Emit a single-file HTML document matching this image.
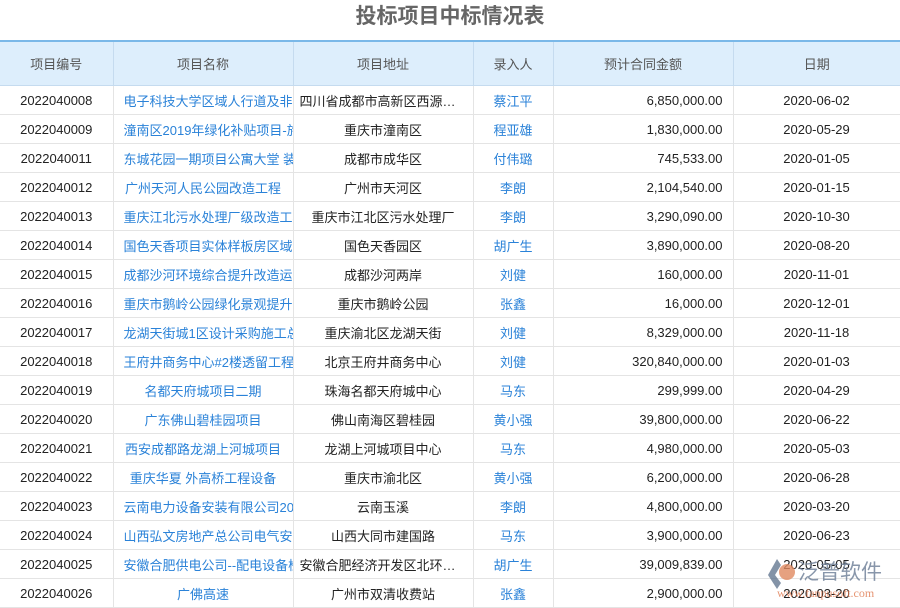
<!DOCTYPE html>
<html><head><meta charset="utf-8"><style>
*{margin:0;padding:0;box-sizing:border-box}
body{width:900px;height:600px;overflow:hidden;background:#fff;font-family:"Liberation Sans","Noto Sans CJK SC",sans-serif;position:relative}
h1{position:absolute;top:2px;left:0;width:900px;text-align:center;font-size:21px;line-height:30px;color:#666;font-weight:bold}
table{position:absolute;top:40px;left:0;border-collapse:collapse;table-layout:fixed;width:900px}
th{height:44px;background:#ddeefc;color:#555;font-weight:normal;font-size:13px;border-left:1px solid #c5dbef;border-top:2px solid #7ab8e8;border-bottom:1px solid #c5dbef}
td{height:29px;font-size:13px;color:#222;border:1px solid #e4e4e4;white-space:nowrap;overflow:hidden;text-align:center;padding:1px 10px 0}
td.n,td.p{color:#2a82d8}
td.n{text-overflow:clip}
td.a{text-overflow:ellipsis;padding:1px 6px 0}
td.m{text-align:right;padding-right:10px}
th:first-child,td:first-child{border-left:none}
.logo{position:absolute;left:765px;top:553px;width:135px;height:47px}
</style></head><body>
<h1>投标项目中标情况表</h1>
<table>
<colgroup><col style="width:113px"><col style="width:180px"><col style="width:180px"><col style="width:80px"><col style="width:180px"><col style="width:167px"></colgroup>
<tr><th>项目编号</th><th>项目名称</th><th>项目地址</th><th>录入人</th><th>预计合同金额</th><th>日期</th></tr>
<tr><td>2022040008</td><td class="n">电子科技大学区域人行道及非机动车道改造</td><td class="a">四川省成都市高新区西源大道</td><td class="p">蔡江平</td><td class="m">6,850,000.00</td><td>2020-06-02</td></tr>
<tr><td>2022040009</td><td class="n">潼南区2019年绿化补贴项目-施工</td><td class="a">重庆市潼南区</td><td class="p">程亚雄</td><td class="m">1,830,000.00</td><td>2020-05-29</td></tr>
<tr><td>2022040011</td><td class="n">东城花园一期项目公寓大堂 装修</td><td class="a">成都市成华区</td><td class="p">付伟璐</td><td class="m">745,533.00</td><td>2020-01-05</td></tr>
<tr><td>2022040012</td><td class="n">广州天河人民公园改造工程</td><td class="a">广州市天河区</td><td class="p">李朗</td><td class="m">2,104,540.00</td><td>2020-01-15</td></tr>
<tr><td>2022040013</td><td class="n">重庆江北污水处理厂级改造工程</td><td class="a">重庆市江北区污水处理厂</td><td class="p">李朗</td><td class="m">3,290,090.00</td><td>2020-10-30</td></tr>
<tr><td>2022040014</td><td class="n">国色天香项目实体样板房区域装修</td><td class="a">国色天香园区</td><td class="p">胡广生</td><td class="m">3,890,000.00</td><td>2020-08-20</td></tr>
<tr><td>2022040015</td><td class="n">成都沙河环境综合提升改造运维</td><td class="a">成都沙河两岸</td><td class="p">刘健</td><td class="m">160,000.00</td><td>2020-11-01</td></tr>
<tr><td>2022040016</td><td class="n">重庆市鹅岭公园绿化景观提升工程</td><td class="a">重庆市鹅岭公园</td><td class="p">张鑫</td><td class="m">16,000.00</td><td>2020-12-01</td></tr>
<tr><td>2022040017</td><td class="n">龙湖天街城1区设计采购施工总承包</td><td class="a">重庆渝北区龙湖天街</td><td class="p">刘健</td><td class="m">8,329,000.00</td><td>2020-11-18</td></tr>
<tr><td>2022040018</td><td class="n">王府井商务中心#2楼透留工程施工</td><td class="a">北京王府井商务中心</td><td class="p">刘健</td><td class="m">320,840,000.00</td><td>2020-01-03</td></tr>
<tr><td>2022040019</td><td class="n">名都天府城项目二期</td><td class="a">珠海名都天府城中心</td><td class="p">马东</td><td class="m">299,999.00</td><td>2020-04-29</td></tr>
<tr><td>2022040020</td><td class="n">广东佛山碧桂园项目</td><td class="a">佛山南海区碧桂园</td><td class="p">黄小强</td><td class="m">39,800,000.00</td><td>2020-06-22</td></tr>
<tr><td>2022040021</td><td class="n">西安成都路龙湖上河城项目</td><td class="a">龙湖上河城项目中心</td><td class="p">马东</td><td class="m">4,980,000.00</td><td>2020-05-03</td></tr>
<tr><td>2022040022</td><td class="n">重庆华夏 外高桥工程设备</td><td class="a">重庆市渝北区</td><td class="p">黄小强</td><td class="m">6,200,000.00</td><td>2020-06-28</td></tr>
<tr><td>2022040023</td><td class="n">云南电力设备安装有限公司2020年项目</td><td class="a">云南玉溪</td><td class="p">李朗</td><td class="m">4,800,000.00</td><td>2020-03-20</td></tr>
<tr><td>2022040024</td><td class="n">山西弘文房地产总公司电气安装工程</td><td class="a">山西大同市建国路</td><td class="p">马东</td><td class="m">3,900,000.00</td><td>2020-06-23</td></tr>
<tr><td>2022040025</td><td class="n">安徽合肥供电公司--配电设备检修</td><td class="a">安徽合肥经济开发区北环路一号</td><td class="p">胡广生</td><td class="m">39,009,839.00</td><td>2020-05-05</td></tr>
<tr><td>2022040026</td><td class="n">广佛高速</td><td class="a">广州市双清收费站</td><td class="p">张鑫</td><td class="m">2,900,000.00</td><td>2020-03-20</td></tr>
</table>
<svg class="logo" viewBox="0 0 135 47">
<path d="M12 6 L3 22 L12 36 L16 30 L10 22 L16 12Z" fill="#5a6f8a" opacity=".75"/>
<circle cx="22" cy="19" r="8" fill="#e08a60" opacity=".8"/>
<text x="33" y="26" font-size="21" fill="#6b7d95" opacity=".8" font-family="Noto Sans CJK SC,sans-serif">泛普软件</text>
<text x="12" y="44" font-size="12" fill="#e07a50" opacity=".8" font-family="Liberation Serif,serif">www.fanpusoft.com</text>
</svg>
</body></html>
